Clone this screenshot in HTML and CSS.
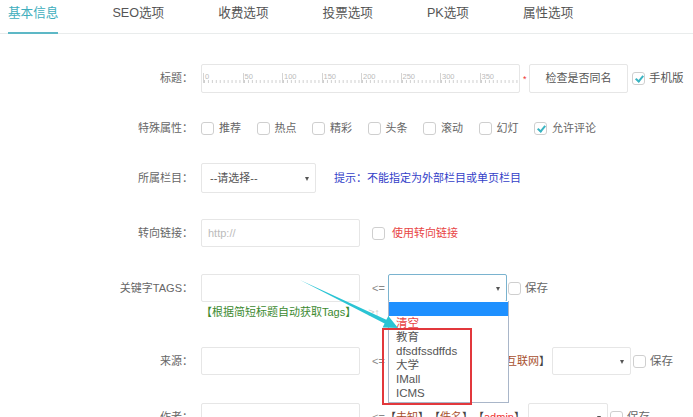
FILE: index.html
```html
<!DOCTYPE html>
<html>
  <head>
    <meta charset="UTF-8">
    <title>内容编辑</title>
    <link rel="stylesheet" href="styles.css">
  </head>
  <body>
    <div class="tabs">
      <span class="tab active">基本信息</span>
      <span class="tab">SEO选项</span>
      <span class="tab">收费选项</span>
      <span class="tab">投票选项</span>
      <span class="tab">PK选项</span>
      <span class="tab">属性选项</span>
    </div>

    <div class="form">
      <div class="row first">
        <span class="label">标题：</span>
        <div class="ruler-box">
          <div class="ruler">
            <span class="mark">0</span><span class="mark">50</span><span class="mark">100</span><span class="mark">150</span><span class="mark">200</span><span class="mark">250</span><span class="mark">300</span><span class="mark">350</span>
          </div>
        </div>
        <span class="star">*</span>
        <span class="btn">检查是否同名</span>
        <span class="check on mobile"></span><span class="text">手机版</span>
      </div>

      <div class="row">
        <span class="label">特殊属性：</span>
        <span class="opt"><span class="check"></span><span class="text">推荐</span></span>
        <span class="opt"><span class="check"></span><span class="text">热点</span></span>
        <span class="opt"><span class="check"></span><span class="text">精彩</span></span>
        <span class="opt"><span class="check"></span><span class="text">头条</span></span>
        <span class="opt"><span class="check"></span><span class="text">滚动</span></span>
        <span class="opt"><span class="check"></span><span class="text">幻灯</span></span>
        <span class="opt"><span class="check on"></span><span class="text">允许评论</span></span>
      </div>

      <div class="row">
        <span class="label">所属栏目：</span>
        <div class="select big">--请选择--</div>
        <span class="hint">提示：不能指定为外部栏目或单页栏目</span>
      </div>

      <div class="row wide">
        <span class="label">转向链接：</span>
        <div class="input"><span class="ph">http://</span></div>
        <span class="check after-input"></span><span class="warn">使用转向链接</span>
      </div>

      <div class="row wide">
        <span class="label">关键字TAGS：</span>
        <div class="input"></div>
        <span class="arrow-l">&lt;=</span>
        <div class="select open kw">
          <div class="options">
            <div class="opt-item picked"></div>
            <div class="opt-item clear">清空</div>
            <div class="opt-item">教育</div>
            <div class="opt-item">dfsdfssdffds</div>
            <div class="opt-item">大学</div>
            <div class="opt-item">IMall</div>
            <div class="opt-item">ICMS</div>
          </div>
        </div>
        <span class="check tight"></span><span class="text save">保存</span>
      </div>
      <div class="row tip">
        <span class="label"></span>
        <span class="green">【根据简短标题自动获取Tags】</span>
        <span class="faint">≥↑</span>
      </div>

      <div class="row source">
        <span class="label">来源：</span>
        <div class="input"></div>
        <span class="arrow-l">&lt;=</span>
        <span class="tags">【<b>本站原创</b>】【<b>转载</b>】【<b>互联网</b>】</span>
        <div class="select src"></div>
        <span class="check tight2"></span><span class="text save">保存</span>
      </div>

      <div class="row author">
        <span class="label">作者：</span>
        <div class="input"></div>
        <span class="arrow-l">&lt;=</span>
        <span class="tags">【<b>未知</b>】【<b>佚名</b>】【<i>admin</i>】</span>
        <div class="select auth"></div>
        <span class="check tight2"></span><span class="text save">保存</span>
      </div>
    </div>

    <svg class="overlay" width="693" height="417" viewBox="0 0 693 417">
      <rect x="383" y="329" width="88" height="75" fill="none" stroke="#e2383c" stroke-width="2"/>
      <polygon points="300,280 386.3,319.8 388.4,315.9 398,328 382.6,327.4 384.6,323.4" fill="#2ac4d4"/>
    </svg>
  </body>
</html>
```

FILE: styles.css
```css
body {
  margin: 0;
  width: 693px;
  height: 417px;
  overflow: hidden;
  position: relative;
  background: #fff;
  color: #666;
  font-family: "Liberation Sans", "Noto Sans CJK SC", sans-serif;
  font-size: 11px;
  text-spacing-trim: space-all;
}

.tabs {
  display: flex;
  align-items: flex-start;
  height: 33px;
  padding-left: 8px;
  border-bottom: 1px solid #e9ecec;
}

.tab {
  height: 33px;
  box-sizing: border-box;
  margin-right: 54px;
  font-size: 12.6px;
  line-height: 26px;
  color: #555;
  white-space: nowrap;
}

.tab.active {
  height: 34px;
  color: #3eaebd;
  border-bottom: 2px solid #5db8c6;
}

.form {
  padding-top: 29px;
}

.row {
  display: flex;
  align-items: center;
  height: 30px;
  margin-top: 20px;
  white-space: nowrap;
  line-height: 14px;
}

.row.first {
  margin-top: 0;
}

.row.wide {
  margin-top: 25px;
}

.row.tip {
  height: 14px;
  margin-top: 2px;
}

.row.source {
  margin-top: 27px;
}

.row.author {
  margin-top: 26px;
}

.label {
  flex: none;
  width: 193px;
  margin-right: 8px;
  text-align: right;
  color: #666;
}

.ruler-box {
  width: 319px;
  height: 29px;
  box-sizing: border-box;
  border: 1px solid #e6e6e6;
  border-radius: 2px;
  padding: 8px 0 0 1px;
}

.ruler {
  display: flex;
}

.mark {
  flex: none;
  width: 39.5px;
  height: 10px;
  box-sizing: border-box;
  border-left: 1px solid #d4d4d4;
  padding-left: 1px;
  font-size: 7.5px;
  line-height: 8px;
  color: #bbb;
  background: linear-gradient(to right, #cfcfcf 1px, transparent 1px) left bottom / 3.95px 3px repeat-x;
}

.star {
  align-self: flex-start;
  margin: 9px 0 0 3px;
  width: 4px;
  color: #e33;
  font-size: 9px;
}

.btn {
  margin-left: 2px;
  width: 99px;
  height: 29px;
  box-sizing: border-box;
  border: 1px solid #e6e6e6;
  border-radius: 2px;
  text-align: center;
  line-height: 27px;
  color: #555;
}

.check {
  flex: none;
  position: relative;
  width: 13px;
  height: 13px;
  box-sizing: border-box;
  border: 1px solid #cfcfcf;
  border-radius: 3px;
  background: #fff;
}

.check.on::after {
  content: "";
  position: absolute;
  left: 3.5px;
  top: 1.5px;
  width: 3px;
  height: 6px;
  border-right: 2px solid #3bb4c2;
  border-bottom: 2px solid #3bb4c2;
  transform: rotate(40deg);
}

.check.mobile {
  margin-left: 4px;
}

.text {
  margin-left: 4px;
  color: #666;
}

.mobile + .text {
  font-size: 11.5px;
  color: #555;
}

.opt {
  display: flex;
  align-items: center;
  margin-right: 15.5px;
}

.opt .text {
  margin-left: 5px;
}

.select {
  position: relative;
  height: 28px;
  box-sizing: border-box;
  border: 1px solid #e6e6e6;
  border-radius: 2px;
  background: #fff;
  padding-left: 8px;
  line-height: 26px;
  color: #555;
}

.select::after {
  content: "";
  position: absolute;
  right: 6px;
  top: 12px;
  border-left: 2.5px solid transparent;
  border-right: 2.5px solid transparent;
  border-top: 4px solid #555;
}

.select.big {
  width: 115px;
  height: 30px;
  line-height: 28px;
}

.select.big::after {
  top: 13px;
}

.hint {
  margin-left: 18px;
  color: #3340c8;
}

.input {
  width: 159px;
  height: 28px;
  box-sizing: border-box;
  border: 1px solid #e6e6e6;
  border-radius: 2px;
  padding-left: 6px;
  line-height: 26px;
}

.ph {
  color: #bbb;
}

.check.after-input {
  margin-left: 12px;
}

.warn {
  margin-left: 7px;
  color: #e84545;
}

.arrow-l {
  width: 13px;
  margin-left: 12px;
  color: #888;
}

.select.kw {
  width: 119px;
  margin-left: 3px;
  border-color: #7ab3cf;
  z-index: 3;
}

.options {
  position: absolute;
  left: -1px;
  top: 100%;
  width: 119px;
  border: 1px solid #a9b6c9;
  border-top: none;
  background: #fff;
  padding-top: 1px;
  padding-bottom: 2px;
}

.opt-item {
  height: 14px;
  padding-left: 7px;
  line-height: 14px;
  font-size: 11.5px;
  color: #555;
}

.opt-item.picked {
  background: #1e90ff;
}

.opt-item.clear {
  color: #e84545;
}

.check.tight {
  margin-left: 1px;
}

.check.tight2 {
  margin-left: 2px;
}

.save {
  margin-left: 4px;
  font-size: 11.5px;
}

.green {
  color: #3c8a30;
}

.faint {
  margin-left: 12px;
  color: #ccc;
}

.tags {
  color: #444;
}

.tags b {
  font-weight: normal;
  color: #a8502e;
}

.tags i {
  font-style: normal;
  color: #e33;
}

.select.src {
  width: 79px;
  margin-left: 2px;
}

.select.auth {
  width: 80px;
  margin-left: 3px;
}

.overlay {
  position: absolute;
  left: 0;
  top: 0;
  z-index: 5;
  pointer-events: none;
}
```
